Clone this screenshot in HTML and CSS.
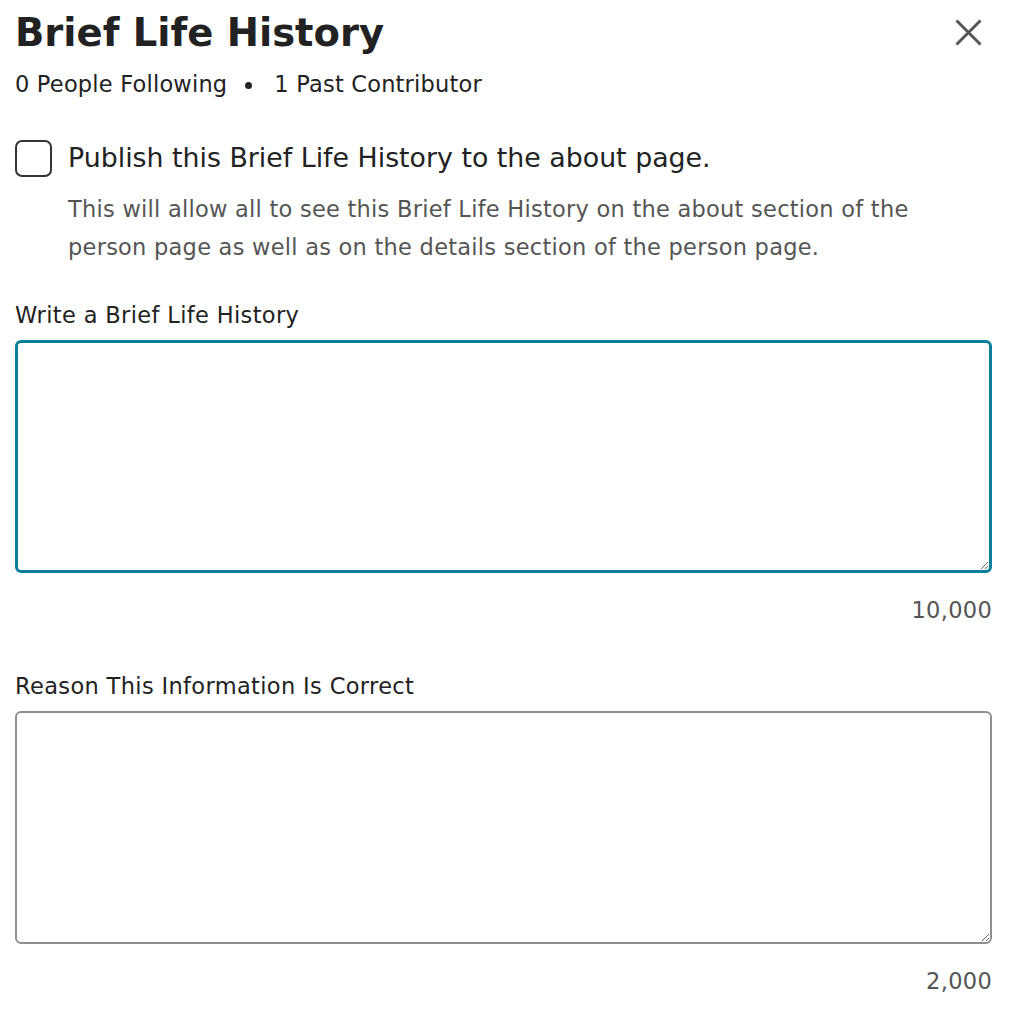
FILE: index.html
```
<!DOCTYPE html>
<html>
<head>
<meta charset="utf-8">
<link rel="stylesheet" href="styles.css">
</head>
<body>
<div class="dialog">
  <header class="head">
    <h1 class="title">Brief Life History</h1>
    <button class="close" aria-label="Close">
      <svg width="27" height="27" viewBox="0 0 27 27"><path d="M1.5 1.5 L25.5 25.5 M25.5 1.5 L1.5 25.5" stroke="#555" stroke-width="3"/></svg>
    </button>
  </header>
  <div class="meta">0 People Following<span class="dot"></span>1 Past Contributor</div>

  <div class="check-row">
    <span class="checkbox"></span>
    <div class="check-text">
      <div class="check-label">Publish this Brief Life History to the about page.</div>
      <p class="check-desc">This will allow all to see this Brief Life History on the about section of the person page as well as on the details section of the person page.</p>
    </div>
  </div>

  <label class="field-label">Write a Brief Life History</label>
  <textarea class="area area-focus"></textarea>
  <div class="counter">10,000</div>

  <label class="field-label second">Reason This Information Is Correct</label>
  <textarea class="area area-plain"></textarea>
  <div class="counter">2,000</div>
</div>
</body>
</html>
```
FILE: styles.css
```
* { box-sizing: border-box; }
body {
  margin: 0;
  background: #fff;
  font-family: "DejaVu Sans", Verdana, sans-serif;
  color: #222;
}
.dialog {
  padding: 10px 18px 0 15px;
}
.head {
  display: flex;
  justify-content: space-between;
  align-items: flex-start;
}
.title {
  margin: 0;
  font-size: 38.5px;
  line-height: 46px;
  font-weight: bold;
  color: #222;
}
.close {
  border: 0;
  background: none;
  padding: 0;
  margin: 9px 10px 0 0;
  width: 27px;
  height: 27px;
  display: block;
}
.close svg { display: block; }
.meta {
  font-size: 22.5px;
  line-height: 30px;
  letter-spacing: 0.2px;
  margin-top: 13px;
  color: #222;
  display: flex;
  align-items: center;
}
.dot {
  display: inline-block;
  width: 7px;
  height: 7px;
  border-radius: 50%;
  background: #222;
  margin: 3px 22px 0 18px;
}
.check-row {
  display: flex;
  gap: 16px;
  margin-top: 41px;
}
.checkbox {
  flex: none;
  width: 37px;
  height: 37px;
  border: 2px solid #333;
  border-radius: 7px;
}
.check-label {
  font-size: 26.8px;
  line-height: 36px;
  color: #222;
}
.check-desc {
  margin: 14px 0 0;
  font-size: 22.5px;
  line-height: 38px;
  letter-spacing: 0.25px;
  color: #555;
  padding-right: 60px;
}
.field-label {
  display: block;
  font-size: 22.5px;
  line-height: 30px;
  letter-spacing: 0.35px;
  margin-top: 34px;
  color: #222;
}
.field-label.second {
  margin-top: 46px;
}
.area {
  display: block;
  width: 100%;
  height: 233px;
  margin-top: 10px;
  border-radius: 6px;
  font-family: inherit;
  font-size: 20px;
  resize: vertical;
  outline: none;
  background: #fff;
}
.area-focus {
  border: 3px solid #0e7f9b;
}
.area-plain {
  border: 2px solid #8f8f8f;
}
.counter {
  text-align: right;
  font-size: 22.5px;
  line-height: 30px;
  letter-spacing: 0.3px;
  color: #555;
  margin-top: 22px;
}
```
